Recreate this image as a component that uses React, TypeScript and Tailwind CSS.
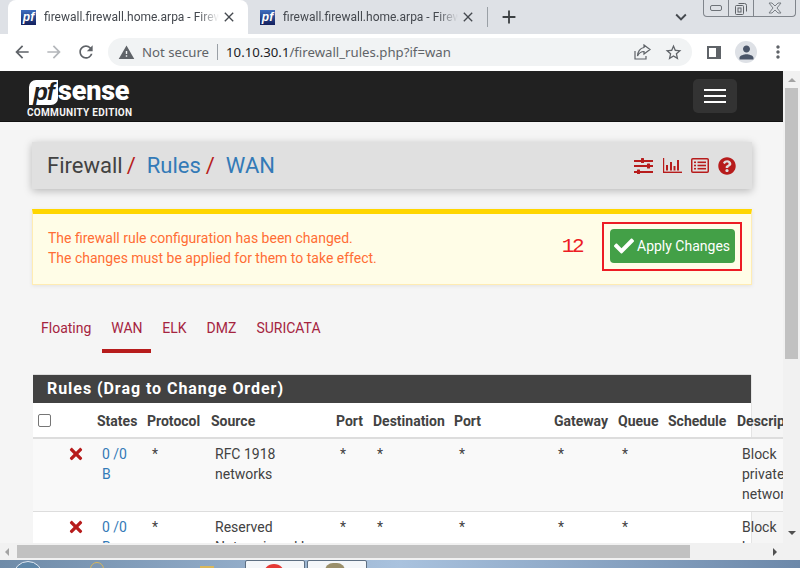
import React from "react";
import { FaCheck, FaTimes, FaQuestionCircle } from "react-icons/fa";
import { MdArrowBack, MdArrowForward, MdRefresh, MdWarning, MdStarBorder, MdPerson, MdMoreVert, MdClose, MdAdd, MdKeyboardArrowDown } from "react-icons/md";

const GRID = "grid w-[750px] grid-cols-[31px_33px_50px_64px_125px_37px_81px_100px_64px_50px_69px_46px]";

function Favicon() {
  return (
    <div className="flex h-[15px] w-[15px] shrink-0 items-center justify-center bg-gradient-to-b from-[#3f6fc0] to-[#14205e] font-['Liberation_Sans',sans-serif] text-[12px] leading-none font-bold text-white italic">
      pf
    </div>
  );
}

function Tab({ active }: { active: boolean }) {
  return (
    <div className={active ? "flex h-[34px] w-[240px] items-center rounded-t-lg bg-white pr-[9px] pl-[13px]" : "flex h-[34px] w-[239px] items-center pr-[9px] pl-[12px]"}>
      <Favicon />
      <span className="ml-[8px] w-[175px] overflow-hidden font-[Roboto,sans-serif] text-[12px] whitespace-nowrap text-[#45494f] [mask-image:linear-gradient(to_right,black_88%,transparent)]">
        firewall.firewall.home.arpa - Firew
      </span>
      <MdClose className="ml-[2px] shrink-0 text-[#45494f]" size={16} />
    </div>
  );
}

function SlidersIcon() {
  return (
    <svg width="20" height="16" viewBox="0 0 20 16" className="shrink-0" fill="#b71c1c">
      <rect x="0" y="2" width="19" height="2" />
      <rect x="0" y="7" width="19" height="2" />
      <rect x="0" y="13" width="19" height="2" />
      <rect x="7" y="0" width="3" height="5" rx="0.5" />
      <rect x="13" y="5.5" width="3" height="5" rx="0.5" />
      <rect x="3" y="11.5" width="3" height="4.500" rx="0.5" />
    </svg>
  );
}

function ChartIcon() {
  return (
    <svg width="19" height="15" viewBox="0 0 19 15" className="shrink-0" fill="#b71c1c">
      <rect x="0" y="0" width="1.2" height="15" />
      <rect x="0" y="13.6" width="19" height="1.4" />
      <rect x="3" y="7" width="2" height="5.5" />
      <rect x="7" y="4" width="2" height="8.5" />
      <rect x="10.5" y="8" width="2" height="4.5" />
      <rect x="14" y="2" width="2" height="10.5" />
    </svg>
  );
}

function ListIcon() {
  return (
    <svg width="18" height="15" viewBox="0 0 18 15" className="shrink-0" fill="none" stroke="#b71c1c">
      <rect x="0.75" y="0.75" width="16.5" height="13.5" rx="1" strokeWidth="1.5" />
      <rect x="3" y="3.5" width="2" height="1.6" fill="#b71c1c" stroke="none" />
      <rect x="3" y="6.7" width="2" height="1.6" fill="#b71c1c" stroke="none" />
      <rect x="3" y="9.9" width="2" height="1.6" fill="#b71c1c" stroke="none" />
      <rect x="6.5" y="3.5" width="8.5" height="1.6" fill="#b71c1c" stroke="none" />
      <rect x="6.5" y="6.7" width="8.5" height="1.6" fill="#b71c1c" stroke="none" />
      <rect x="6.5" y="9.9" width="8.5" height="1.6" fill="#b71c1c" stroke="none" />
    </svg>
  );
}

function ShareIcon() {
  return (
    <svg width="17" height="16" viewBox="0 0 17 16" fill="none" stroke="#5f6368" strokeWidth="1.2">
      <path d="M1 7v8h11v-3" />
      <path d="M10 1l6 4.500-6 4.500V7.500C7 7.500 5 9 3.500 12 3.700 8 6 4 10 3.500z" />
    </svg>
  );
}

function Row({ striped, src, states2, desc }: { striped: boolean; src: string[]; states2: string; desc: string[] }) {
  return (
    <div className={striped ? `${GRID} h-[73px] border-b border-[#dddddd] bg-[#f9f9f9]` : `${GRID} h-[73px] border-b border-[#dddddd]`}>
      <div />
      <div className="pt-[6px] pl-[3px]">
        <FaTimes className="text-[#b71c1c]" size={18} />
      </div>
      <div className="pt-[5px] pl-[5px] text-[#337ab7]">
        0 /0
        <br />
        {states2}
      </div>
      <div className="pt-[5px] pl-[5px]">*</div>
      <div className="pt-[5px] pl-[4px]">
        {src.map((s) => (
          <div key={s}>{s}</div>
        ))}
      </div>
      <div className="pt-[5px] pl-[4px]">*</div>
      <div className="pt-[5px] pl-[4px]">*</div>
      <div className="pt-[5px] pl-[5px]">*</div>
      <div className="pt-[5px] pl-[4px]">*</div>
      <div className="pt-[5px] pl-[4px]">*</div>
      <div />
      <div className="overflow-hidden pt-[5px] pl-[5px] whitespace-nowrap">
        {desc.map((s) => (
          <div key={s}>{s}</div>
        ))}
      </div>
    </div>
  );
}

export default function App() {
  const headers = ["", "", "States", "Protocol", "Source", "Port", "Destination", "Port", "Gateway", "Queue", "Schedule", "Descrip"];
  return (
    <div className="flex h-[568px] w-[800px] flex-col overflow-hidden bg-white font-[Roboto,sans-serif] text-[14px] leading-[20px] text-[#424242]">
      {/* tab strip */}
      <div className="relative flex h-[34px] shrink-0 items-end bg-[#dee1e6] pl-[8px]">
        <Tab active />
        <Tab active={false} />
        <div className="mb-[7px] h-[20px] w-px shrink-0 bg-[#9aa0a6]" />
        <MdAdd className="mb-[6px] ml-[10px] shrink-0 text-[#3c4043]" size={22} />
        <MdKeyboardArrowDown className="absolute top-[6px] left-[670px] text-[#45494f]" size={22} />
        <div className="absolute top-0 left-[703px] flex h-[17px] w-[93px] rounded-b-[4px] border border-t-0 border-[#80858c]">
          <div className="flex w-[25px] items-center justify-center border-r border-[#80858c]">
            <div className="h-[6px] w-[12px] rounded-[2px] border border-[#6d7278]" />
          </div>
          <div className="flex w-[25px] items-center justify-center border-r border-[#80858c]">
            <svg width="12" height="13" viewBox="0 0 12 13" fill="none" stroke="#5f6368">
              <rect x="0.500" y="3.500" width="8" height="9" rx="1" />
              <path d="M3.500 1.500h6a2 2 0 0 1 2 2v6" />
              <rect x="3" y="6" width="3" height="4" />
            </svg>
          </div>
          <div className="flex flex-1 items-center justify-center">
            <svg width="14" height="12" viewBox="0 0 14 12" fill="none" stroke="#7b8086">
              <path d="M1 1h3l3 3 3-3h3l-4 5 4 5h-3L7 8l-3 3H1l4-5z" />
            </svg>
          </div>
        </div>
      </div>

      {/* toolbar */}
      <div className="flex h-[37px] shrink-0 items-start bg-white pt-[4px]">
        <div className="flex h-[27px] w-[108px] shrink-0 items-center pl-[12px] text-[#5f6368]">
          <MdArrowBack size={20} />
          <MdArrowForward className="ml-[12px] text-[#b4b7bb]" size={20} />
          <MdRefresh className="ml-[12px]" size={20} />
        </div>
        <div className="flex h-[28px] w-[584px] shrink-0 items-center rounded-full bg-[#f1f3f4] pl-[10px] font-['Noto_Sans',sans-serif]">
          <MdWarning className="shrink-0 text-[#5f6368]" size={17} />
          <span className="ml-[7px] text-[13.200px] text-[#5f6368]">Not secure</span>
          <div className="mx-[8px] h-[16px] w-px bg-[#9aa0a6]" />
          <span className="text-[13.200px] whitespace-nowrap text-[#5f6368]">
            <span className="text-[#202124]">10.10.30.1</span>/firewall_rules.php?if=wan
          </span>
          <div className="ml-auto flex items-center pr-[9px]">
            <ShareIcon />
            <MdStarBorder className="ml-[13px] text-[#5f6368]" size={19} />
          </div>
        </div>
        <div className="flex h-[28px] flex-1 items-center pl-[15px]">
          <div className="h-[13px] w-[14px] shrink-0 border-y-2 border-r-[5px] border-l-2 border-[#5f6368] bg-white" />
          <div className="ml-[14px] flex h-[22px] w-[22px] shrink-0 items-center justify-center overflow-hidden rounded-full bg-[#dee1e6]">
            <MdPerson className="text-[#4a5568]" size={21} />
          </div>
          <MdMoreVert className="ml-[11px] shrink-0 text-[#5f6368]" size={20} />
        </div>
      </div>

      {/* viewport */}
      <div className="flex min-h-0 flex-1">
        <div className="min-w-0 flex-1 overflow-hidden bg-[#f5f5f5]">
          <div className="flex h-[51px] items-center justify-between border-b border-[#111111] bg-[#212121] pr-[46px] pl-[27px]">
            <div className="flex w-[106px] flex-col pt-[2px]">
              <div className="flex h-[28px] items-end pl-[2px]">
                <div className="flex h-[25px] w-[29px] items-center justify-center rounded-tl-[7px] rounded-br-[7px] bg-white font-['Liberation_Sans',sans-serif] text-[24px] leading-none font-bold tracking-[-1px] text-[#212121] italic">
                  pf
                </div>
                <span className="font-[Roboto,sans-serif] text-[27px] leading-[28px] font-black tracking-[-0.2px] text-white">sense</span>
              </div>
              <div className="mt-[3px] text-[10px] leading-[10px] font-bold tracking-[0.3px] whitespace-nowrap text-[#f5f5f5]">COMMUNITY EDITION</div>
            </div>
            <div className="flex h-[34px] w-[44px] flex-col items-center justify-center gap-[4px] rounded-[5px] bg-[#333333]">
              <div className="h-[2px] w-[22px] bg-white" />
              <div className="h-[2px] w-[22px] bg-white" />
              <div className="h-[2px] w-[22px] bg-white" />
            </div>
          </div>

          <div className="pt-[20px] pl-[32px]">
            {/* breadcrumb */}
            <div className="flex h-[47px] w-[720px] items-center justify-between bg-[#e0e0e0] pr-[15px] pl-[15px] shadow-[0_2px_8px_rgba(0,0,0,0.25)]">
              <div className="text-[22px] leading-[47px] whitespace-nowrap">
                Firewall<span className="ml-[4px] text-[#b71c1c]">/</span>
                <span className="ml-[11px] text-[#337ab7]">Rules</span>
                <span className="ml-[5px] text-[#b71c1c]">/</span>
                <span className="ml-[11px] text-[#337ab7]">WAN</span>
              </div>
              <div className="flex items-center gap-[9px] pr-[1px]">
                <SlidersIcon />
                <ChartIcon />
                <ListIcon />
                <FaQuestionCircle className="shrink-0 text-[#b71c1c]" size={18} />
              </div>
            </div>

            {/* alert */}
            <div className="mt-[20px] flex h-[76px] w-[720px] items-center border-x border-b border-t-[5px] border-x-[#ffecb3] border-b-[#ffecb3] border-t-[#ffd600] bg-[#fffde7] pl-[15px] text-[#ff6d35] shadow-[0_1px_4px_rgba(0,0,0,0.08)]">
              <div className="mb-[2px] flex-1">
                <div>The firewall rule configuration has been changed.</div>
                <div>The changes must be applied for them to take effect.</div>
              </div>
              <span className="mr-[20px] mb-[5px] font-['Liberation_Mono',monospace] text-[21px] tracking-[-2.5px] text-[#ed1c24]">12</span>
              <div className="mr-[9px] mb-[6px] flex h-[49px] w-[140px] items-center justify-center border-2 border-[#ed1c24]">
                <div className="ml-px flex h-[34px] w-[125px] items-center rounded-[4px] bg-[#43a047] pl-[4px] text-white">
                  <FaCheck size={20} />
                  <span className="ml-[3px] whitespace-nowrap">Apply Changes</span>
                </div>
              </div>
            </div>

            {/* tabs */}
            <div className="mt-[33px] flex h-[35px] text-[#a5243f]">
              <div className="pr-[11px] pl-[9px]">Floating</div>
              <div className="relative h-[35px] w-[49px] pl-[9px]">
                WAN
                <div className="absolute bottom-0 left-0 h-[4px] w-[49px] bg-[#b71c1c]" />
              </div>
              <div className="pr-[10px] pl-[11px]">ELK</div>
              <div className="px-[10px]">DMZ</div>
              <div className="px-[10px]">SURICATA</div>
            </div>

            {/* panel */}
            <div className="mt-[22px] ml-px w-[718px] bg-white shadow-[0_-1px_0_#dddddd,1px_0_0_#e4e4e4]">
              <div className="h-[28px] bg-[#424242] pl-[14px] text-[16px] leading-[28px] font-bold tracking-[0.95px] text-white">Rules (Drag to Change Order)</div>
              <div className={`${GRID} mt-px h-[33px] items-center font-bold`}>
                <div className="pl-[5px]">
                  <div className="h-[13px] w-[13px] rounded-[2px] border border-[#767676] bg-white" />
                </div>
                {headers.slice(1).map((h, i) => (
                  <div key={i} className="overflow-hidden whitespace-nowrap">
                    {h}
                  </div>
                ))}
              </div>
              <div className="h-[2px] w-[750px] bg-[#dddddd]" />
              <Row striped src={["RFC 1918", "networks"]} states2="B" desc={["Block", "private", "networks"]} />
              <Row striped={false} src={["Reserved", "Not assigned by"]} states2="B" desc={["Block", "bogon"]} />
            </div>
          </div>
        </div>

        {/* vertical scrollbar */}
        <div className="relative flex w-[17px] shrink-0 flex-col items-center bg-[#f1f1f1]">
          <div className="mt-[7px] h-0 w-0 border-x-[4px] border-b-[4px] border-x-transparent border-b-[#a3a3a3]" />
          <div className="mt-[6px] h-[271px] w-[13px] bg-[#c1c1c1]" />
          <div className="absolute bottom-[8px] h-0 w-0 border-x-[4px] border-t-[4px] border-x-transparent border-t-[#505050]" />
        </div>
      </div>

      {/* horizontal scrollbar */}
      <div className="flex h-[17px] shrink-0 items-center bg-[#f1f1f1]">
        <div className="ml-[5px] h-0 w-0 border-y-[4px] border-r-[4px] border-y-transparent border-r-[#a3a3a3]" />
        <div className="ml-[8px] h-[13px] w-[673px] bg-[#c1c1c1]" />
        <div className="ml-[83px] h-0 w-0 border-y-[4px] border-l-[4px] border-y-transparent border-l-[#505050]" />
      </div>

      {/* taskbar */}
      <div className="relative h-[8px] shrink-0 overflow-hidden bg-gradient-to-r from-[#6f8ba8] via-[#a9c2de] to-[#6c88a9]">
        <div className="absolute top-[1px] left-[13px] h-[30px] w-[30px] rounded-full border border-[#dfe8f2] bg-[#5d86a8]" />
        <div className="absolute top-[2px] left-[90px] h-[10px] w-[14px] rounded-t-full border border-[#d9b75a]" />
        <div className="absolute top-[6px] left-[200px] h-[8px] w-[14px] bg-[#d9b75a]" />
        <div className="absolute top-0 left-[245px] h-[10px] w-[60px] rounded-t-[2px] border border-[#5d6f82] bg-[#f4f7fa]" />
        <div className="absolute top-[4px] left-[263px] h-[22px] w-[22px] rounded-full bg-[#e53935]" />
        <div className="absolute top-0 left-[307px] h-[10px] w-[60px] rounded-t-[2px] border border-[#5d6f82] bg-[#f4f7fa]" />
        <div className="absolute top-[3px] left-[325px] h-[8px] w-[20px] rounded-t-full bg-[#9a8f6a]" />
      </div>
    </div>
  );
}
